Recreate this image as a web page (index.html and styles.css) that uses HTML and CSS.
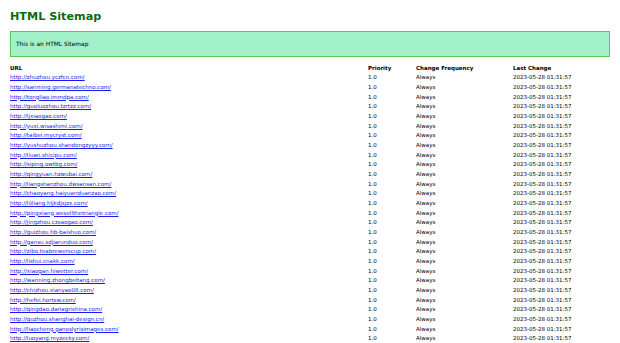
FILE: index.html
```html
<!DOCTYPE html>
<html>
<head>
<meta charset="utf-8">
<title>HTML Sitemap</title>
<link rel="stylesheet" href="styles.css">
</head>
<body>
<h1 class="title">HTML Sitemap</h1>
<div class="intro">This is an HTML Sitemap</div>
<table class="sitemap">
<thead>
<tr><th class="c-url">URL</th><th class="c-pri">Priority</th><th class="c-freq">Change Frequency</th><th class="c-date">Last Change</th></tr>
</thead>
<tbody>
<tr><td><a href="#">http://zhuzhou.yczfcn.com/</a></td><td>1.0</td><td>Always</td><td>2023-05-28 01:31:57</td></tr>
<tr><td><a href="#">http://sanming.germanatechno.com/</a></td><td>1.0</td><td>Always</td><td>2023-05-28 01:31:57</td></tr>
<tr><td><a href="#">http://tongliao.immdpa.com/</a></td><td>1.0</td><td>Always</td><td>2023-05-28 01:31:57</td></tr>
<tr><td><a href="#">http://guoluozhou.tzrtzz.com/</a></td><td>1.0</td><td>Always</td><td>2023-05-28 01:31:57</td></tr>
<tr><td><a href="#">http://ljxiaogao.com/</a></td><td>1.0</td><td>Always</td><td>2023-05-28 01:31:57</td></tr>
<tr><td><a href="#">http://yuxi.wisashimi.com/</a></td><td>1.0</td><td>Always</td><td>2023-05-28 01:31:57</td></tr>
<tr><td><a href="#">http://taibei.mycryst.com/</a></td><td>1.0</td><td>Always</td><td>2023-05-28 01:31:57</td></tr>
<tr><td><a href="#">http://yushuzhou.shandongzyyy.com/</a></td><td>1.0</td><td>Always</td><td>2023-05-28 01:31:57</td></tr>
<tr><td><a href="#">http://liuan.shicipu.com/</a></td><td>1.0</td><td>Always</td><td>2023-05-28 01:31:57</td></tr>
<tr><td><a href="#">http://siping.owtbg.com/</a></td><td>1.0</td><td>Always</td><td>2023-05-28 01:31:57</td></tr>
<tr><td><a href="#">http://qingyuan.hzwubai.com/</a></td><td>1.0</td><td>Always</td><td>2023-05-28 01:31:57</td></tr>
<tr><td><a href="#">http://liangshanzhou.dwsansan.com/</a></td><td>1.0</td><td>Always</td><td>2023-05-28 01:31:57</td></tr>
<tr><td><a href="#">http://chaoyang.haiyuanduanzao.com/</a></td><td>1.0</td><td>Always</td><td>2023-05-28 01:31:57</td></tr>
<tr><td><a href="#">http://lüliang.hljkdjsjzx.com/</a></td><td>1.0</td><td>Always</td><td>2023-05-28 01:31:57</td></tr>
<tr><td><a href="#">http://pingxiang.wesellthetriangle.com/</a></td><td>1.0</td><td>Always</td><td>2023-05-28 01:31:57</td></tr>
<tr><td><a href="#">http://jingzhou.czsaogao.com/</a></td><td>1.0</td><td>Always</td><td>2023-05-28 01:31:57</td></tr>
<tr><td><a href="#">http://guizhou.hb-baishuo.com/</a></td><td>1.0</td><td>Always</td><td>2023-05-28 01:31:57</td></tr>
<tr><td><a href="#">http://gansu.sdjiarunduo.com/</a></td><td>1.0</td><td>Always</td><td>2023-05-28 01:31:57</td></tr>
<tr><td><a href="#">http://zibo.teabrewerscup.com/</a></td><td>1.0</td><td>Always</td><td>2023-05-28 01:31:57</td></tr>
<tr><td><a href="#">http://lishui.cnakk.com/</a></td><td>1.0</td><td>Always</td><td>2023-05-28 01:31:57</td></tr>
<tr><td><a href="#">http://xiaogan.hiwetter.com/</a></td><td>1.0</td><td>Always</td><td>2023-05-28 01:31:57</td></tr>
<tr><td><a href="#">http://wanning.zhongbeitang.com/</a></td><td>1.0</td><td>Always</td><td>2023-05-28 01:31:57</td></tr>
<tr><td><a href="#">http://chizhou.xianyao08.com/</a></td><td>1.0</td><td>Always</td><td>2023-05-28 01:31:57</td></tr>
<tr><td><a href="#">http://hefei.hortsw.com/</a></td><td>1.0</td><td>Always</td><td>2023-05-28 01:31:57</td></tr>
<tr><td><a href="#">http://qingdao.dariagrishina.com/</a></td><td>1.0</td><td>Always</td><td>2023-05-28 01:31:57</td></tr>
<tr><td><a href="#">http://quzhou.shanghai-design.cn/</a></td><td>1.0</td><td>Always</td><td>2023-05-28 01:31:57</td></tr>
<tr><td><a href="#">http://liaocheng.ganoslyrisimages.com/</a></td><td>1.0</td><td>Always</td><td>2023-05-28 01:31:57</td></tr>
<tr><td><a href="#">http://luoyang.myzecky.com/</a></td><td>1.0</td><td>Always</td><td>2023-05-28 01:31:57</td></tr>
</tbody>
</table>
</body>
</html>
```
FILE: styles.css
```css
html {
  overflow: hidden;
}
body {
  margin: 0;
  padding: 10px 10px 0 10px;
  font-family: "DejaVu Sans", Verdana, sans-serif;
  font-size: 5.5px;
  color: #000;
  background: #fff;
}
.title {
  margin: 0 0 7px 0;
  font-size: 11.2px;
  line-height: 14px;
  font-weight: bold;
  color: #0c6a0c;
}
.intro {
  width: 600px;
  box-sizing: border-box;
  height: 26px;
  padding: 0 5px;
  display: flex;
  align-items: center;
  font-size: 5.9px;
  background: #a2f1c8;
  border: 1px solid #5ec45e;
  margin-bottom: 6.5px;
}
.sitemap {
  border-collapse: collapse;
  width: 600px;
}
.sitemap th,
.sitemap td {
  padding: 0;
  height: 9.67px;
  line-height: 9.67px;
  text-align: left;
  vertical-align: middle;
  white-space: nowrap;
}
.sitemap th {
  font-weight: bold;
}
.c-url { width: 358px; }
.c-pri { width: 48px; }
.c-freq { width: 97px; }
.sitemap a {
  color: #1a1aee;
  text-decoration: underline;
}
```
